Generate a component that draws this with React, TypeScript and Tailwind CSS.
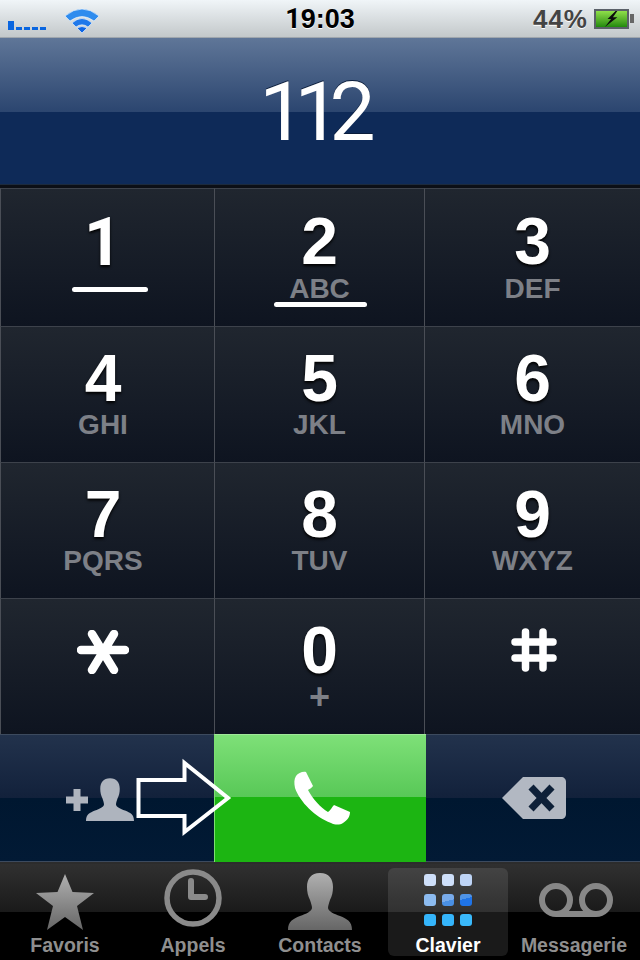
import React from 'react'

const keys = [
  ['1', ''], ['2', 'ABC'], ['3', 'DEF'],
  ['4', 'GHI'], ['5', 'JKL'], ['6', 'MNO'],
  ['7', 'PQRS'], ['8', 'TUV'], ['9', 'WXYZ'],
]

const Key: React.FC<{ digit: React.ReactNode; sub?: string; first?: boolean; top?: boolean; mark?: React.ReactNode }> = x => (
  <div className={`relative flex flex-col items-center border-t border-l border-t-[#3d424b] border-l-[#4a4e56] bg-gradient-to-b from-[#20262f] to-[#0e1420] ${x.top ? 'pt-[20px]' : 'pt-[19px]'} ${x.first ? 'pr-[9px]' : ''}`}>
    <div className={`h-[64px] text-[66px] leading-[64px] font-bold text-white [text-shadow:0_2px_3px_#000] ${x.digit === '1' ? "translate-y-[2px] font-['Roboto']" : ''}`}>{x.digit}</div>
    <div className={`h-[30px] leading-[30px] font-bold text-[#7d8087] ${x.sub === '+' ? 'text-[36px]' : 'text-[28px]'} ${x.top ? 'mt-[1px]' : 'mt-0'}`}>{x.sub}</div>
    {x.mark}
  </div>
)

const Star = () => (
  <svg width="60" height="56" viewBox="0 0 60 56">
    <defs>
      <linearGradient id="tabGrey" x1="0" y1="0" x2="0" y2="1">
        <stop offset="0" stopColor="#b0b0b0" />
        <stop offset="1" stopColor="#666" />
      </linearGradient>
    </defs>
    <polygon points="30,0 37.500,18 59,19 42,32 48,56 30,43 12,56 18,32 1,19 22.500,18" fill="url(#tabGrey)" />
  </svg>
)

const Clock = () => (
  <svg className="mb-[2px]" width="60" height="60" viewBox="0 0 60 60">
    <circle cx="30" cy="30" r="26" fill="none" stroke="#8a8a8a" strokeWidth="5.500" />
    <path d="M28 13v16h14" fill="none" stroke="#8a8a8a" strokeWidth="6" strokeLinejoin="round" strokeLinecap="round" />
  </svg>
)

const Person: React.FC<{ w: number; h: number; fill: string }> = x => (
  <svg width={x.w} height={x.h} viewBox="0 0 64 57">
    <path d="M32 0c9 0 13 6 13 14 0 5-1 9-3 13-1 3-2 6-2 8 0 3 6 6 12 8 7 3 12 5 12 14H0c0-9 5-11 12-14 6-2 12-5 12-8 0-2-1-5-2-8-2-4-3-8-3-13C19 6 23 0 32 0z" fill={x.fill} />
  </svg>
)

const gridCells = [
  'bg-[#cfe0fa]', 'bg-[#cfe0fa]', 'bg-[#bed4f6]',
  'bg-[#8cbbf0]', 'bg-[linear-gradient(165deg,#79abea_55%,#4a90e4_55%)]', 'bg-[linear-gradient(165deg,#4f94e8_40%,#1f74e8_40%)]',
  'bg-[#35b5fb]', 'bg-[#35b5fb]', 'bg-[#3ab9fb]',
]

const Grid = () => (
  <div className="grid grid-cols-3 gap-x-[6px] gap-y-[8px]">
    {gridCells.map((c, i) => (
      <div key={i} className={`h-[12px] w-[12px] rounded-[3px] ${c}`} />
    ))}
  </div>
)

const Voicemail = () => (
  <svg width="74" height="34" viewBox="0 0 74 34">
    <g fill="none" stroke="#878787" strokeWidth="6">
      <circle cx="17" cy="17" r="14" />
      <circle cx="57" cy="17" r="14" />
      <path d="M17 31h40" />
    </g>
  </svg>
)

const Tab: React.FC<{ label: string; active?: boolean; children: React.ReactNode; w: string }> = x => (
  <div className={`flex flex-col items-center rounded-md ${x.w} ${x.active ? 'bg-white/10' : ''}`}>
    <div className="flex h-[62px] items-end justify-center">{x.children}</div>
    <div className={`mt-[4px] text-[19.500px] leading-[22px] font-bold ${x.active ? 'text-white' : 'text-[#8f8f8f]'}`}>{x.label}</div>
  </div>
)

export default function App() {
  return (
    <div className="relative h-[960px] w-[640px] overflow-hidden bg-black font-['Liberation_Sans',Arial,sans-serif]">
      {/* status bar */}
      <div className="relative flex h-[38px] items-center justify-between border-b border-[#9fa6ad] bg-gradient-to-b from-[#f0f5f8] to-[#c3c8ca] pr-[6px] pl-[8px]">
        <div className="mb-[7px] flex items-end gap-[2px] self-end">
          <div className="h-[9px] w-[6px] bg-[#0a66e0]" />
          {[0, 1, 2, 3].map(i => <div key={i} className="h-[3px] w-[6px] bg-[#0a66e0]" />)}
        </div>
        <svg className="absolute top-[8px] left-[65px]" width="34" height="25" viewBox="0 0 34 25">
          <g stroke="#f2f8ff" strokeWidth="0.600">
            <path d="M17 25 12 20Q17 17 22 20z" fill="#0f66e4" />
            <path d="M7 15Q17 6 27 15L23 19Q17 14.500 11 19z" fill="#1f78ea" />
            <path d="M0 8Q17-6 34 8L29 13Q17 4 5 13z" fill="#2f8cee" />
          </g>
        </svg>
        <div className="absolute inset-x-0 top-[4px] text-center text-[27px] leading-[30px] font-bold text-black [text-shadow:0_1px_0_#fff]"><span className="font-['Roboto']">1</span>9:03</div>
        <div className="flex items-center gap-[6px]">
          <div className="text-[26px] leading-[30px] font-bold tracking-[1px] text-[#444] [text-shadow:0_1px_0_#fff]">44%</div>
          <div className="flex items-center gap-[1px]">
            <div className="flex h-[20px] w-[35px] items-center justify-center border-2 border-[#5a6068] bg-gradient-to-b from-[#8fe04a] to-[#1f8a0c]">
              <svg width="20" height="16" viewBox="0 0 20 18"><path d="M14 0 5 9h4L2 18l14-11h-5l5-7z" fill="#0c0c0c" /></svg>
            </div>
            <div className="h-[9px] w-[4px] bg-[#666]" />
          </div>
        </div>
      </div>

      {/* number display */}
      <div className="flex h-[146px] items-center justify-center bg-[linear-gradient(#5f7698,#2b456f_51%,#0e2a58_51%)] pt-[2px] pr-[16px]">
        <div className="font-['Roboto'] text-[82px] leading-[84px] font-normal tracking-[-11px] text-white [text-shadow:0_-1px_0_#0a1c3a]">112</div>
      </div>
      <div className="h-[4px] border-t border-[#1c2a3d] bg-[#0c0f16]" />

      {/* keypad */}
      <div className="grid h-[546px] grid-cols-[214px_210px_216px] grid-rows-[138px_136px_136px_136px]">
        {keys.map(([d, s], i) => (
          <Key key={d} digit={d} sub={s} first={i % 3 === 0} top={i < 3} mark={
            d === '1' ? <div className="absolute top-[98px] left-[71px] h-[5px] w-[76px] rounded-full bg-white" /> :
            d === '2' ? <div className="absolute top-[113px] left-[59px] h-[5px] w-[93px] rounded-full bg-white" /> : undefined
          } />
        ))}
        <Key first digit={
          <svg className="mt-[12px]" width="52" height="44" viewBox="0 0 52 44">
            <path d="M4 20h44M15 4l22 36M37 4 15 40" stroke="#fff" strokeWidth="8.500" strokeLinecap="round" fill="none" />
          </svg>
        } />
        <Key digit="0" sub="+" />
        <Key digit={
          <svg className="mt-[6px]" width="48" height="52" viewBox="0 0 48 52">
            <path d="M16.500 8v36M34 8v36M6 18h38M6 34h38" stroke="#fff" strokeWidth="7.500" strokeLinecap="round" fill="none" />
          </svg>
        } />
      </div>

      {/* action row */}
      <div className="grid h-[128px] grid-cols-[214px_212px_214px]">
        <div className="flex items-center justify-end border-y border-y-[#3c4a5e] bg-[linear-gradient(#22324c,#12213b_50%,#001730_50%,#021a35)] pr-[80px]">
          <svg className="mt-[4px] mr-[-3px]" width="24" height="24" viewBox="0 0 24 24">
            <path d="M12 1v22M1 12h22" stroke="#aeb4be" strokeWidth="7" />
          </svg>
          <div className="mt-[2px]"><Person w={48} h={43} fill="#aeb4be" /></div>
        </div>
        <div className="flex items-center justify-center border-t border-l border-t-[#a0e89a] border-l-[#7de070] bg-[linear-gradient(#7ee078,#58c857_49%,#1cb512_49%,#1cb512)]">
          <svg width="80" height="70" viewBox="0 0 80 70">
            <path d="M15 12C17 9 22 7 25 8L32 22C31 24 28 25 27 26C31 34 40 44 47 48C49 47 51 43 53 41L69 48C69 52 67 56 62 59C59 61 54 61 50 59C34 53 19 38 14 24C13 19 13 15 15 12z" fill="#fff" />
          </svg>
        </div>
        <div className="flex items-center justify-center border-y border-y-[#3c4a5e] bg-[linear-gradient(#22324c,#12213b_50%,#001730_50%,#021a35)] pl-[2px]">
          <svg width="66" height="44" viewBox="0 0 66 44">
            <path d="M22 1h38c3 0 5 2 5 5v32c0 3-2 5-5 5H22L1 22z" fill="#b2b8c2" />
            <path d="M30 11l21 22M51 11 30 33" stroke="#0e2038" strokeWidth="7" />
          </svg>
        </div>
      </div>

      {/* annotation arrow */}
      <svg className="absolute top-[758px] left-[135px]" width="98" height="80" viewBox="0 0 98 80">
        <path d="M3.500 22H49.500V5L93 40 49.500 74V58H3.500z" fill="none" stroke="#fff" strokeWidth="4" />
      </svg>

      {/* tab bar */}
      <div className="flex h-[98px] justify-between border-t-2 border-[#2c2c2c] bg-[linear-gradient(#303030,#1a1a1a_50%,#000_50%)] pt-[4px] pb-[4px]">
        <Tab label="Favoris" w="w-[130px]"><Star /></Tab>
        <Tab label="Appels" w="w-[126px]"><Clock /></Tab>
        <Tab label="Contacts" w="w-[132px] pr-[4px]"><Person w={64} h={57} fill="url(#tabGrey)" /></Tab>
        <Tab label="Clavier" active w="w-[120px]"><div className="pb-[4px]"><Grid /></div></Tab>
        <Tab label="Messagerie" w="w-[132px]"><div className="pb-[13px] pl-[4px]"><Voicemail /></div></Tab>
      </div>
    </div>
  )
}
